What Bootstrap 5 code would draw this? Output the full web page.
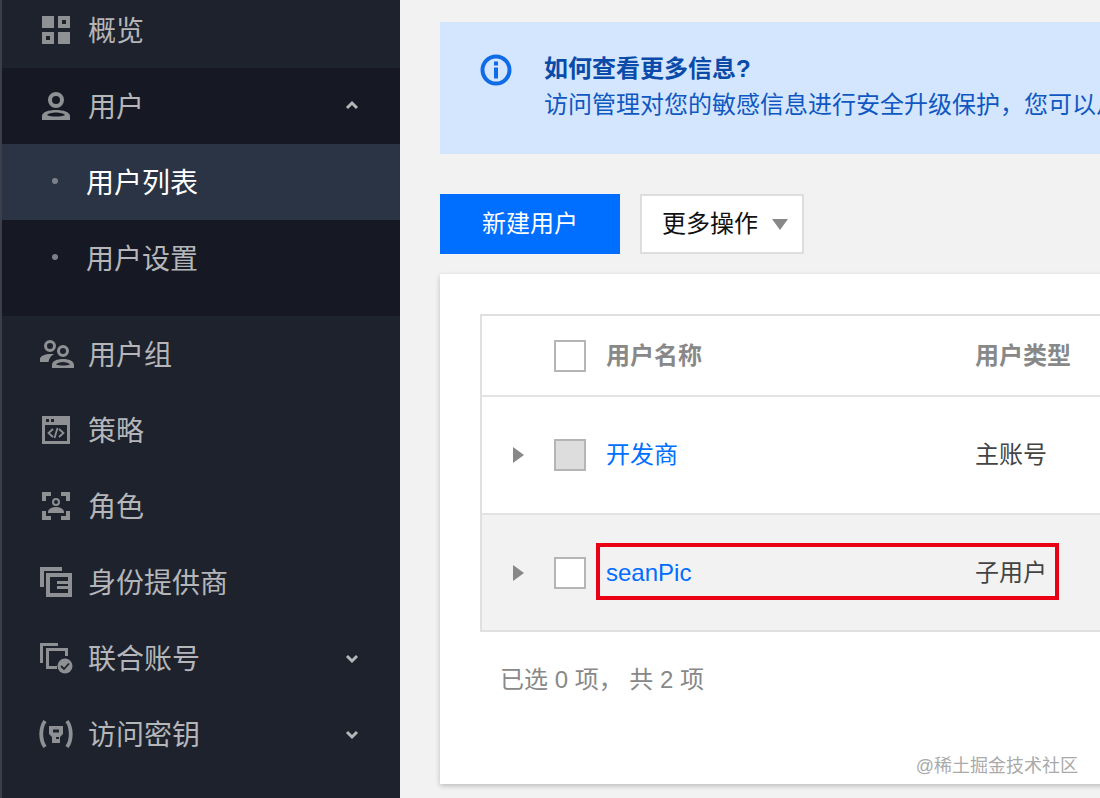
<!DOCTYPE html>
<html lang="zh-CN">
<head>
  <meta charset="UTF-8" />
  <meta name="viewport" content="width=device-width, initial-scale=1.0" />
  <title>用户列表</title>
  <link href="https://cdn.jsdelivr.net/npm/bootstrap@5.3.0/dist/css/bootstrap.min.css" rel="stylesheet">
  <style>
    html, body { height: 798px; overflow: hidden; }
    body {
      background: #f2f2f2;
      font-family: "Liberation Sans", "Noto Sans CJK SC", sans-serif;
    }
    .side-bar {
      width: 400px;
      height: 798px;
      flex: none;
      background: #1e222d;
      border-left: 2px solid #3b3f4b;
    }
    .side-item {
      height: 76px;
      padding: 0 0 0 36px;
      color: #b4b6b9;
      font-size: 28px;
      line-height: 1;
    }
    .side-item:hover { color: #b4b6b9; }
    .side-first { height: 68px; padding-bottom: 8px; }
    .side-icon { width: 36px; height: 32px; flex: none; margin-right: 14px; fill: #8e9093; }
    .side-label { margin-top: 3px; }
    .side-arrow { width: 16px; height: 12px; margin-left: auto; margin-right: 40px; fill: none; stroke: #b4b6b9; stroke-width: 3; }
    .side-group { background: #161923; padding-bottom: 20px; }
    .side-sub { padding-left: 50px; }
    .side-dot { width: 6px; height: 6px; border-radius: 50%; background: #7c808a; margin-right: 28px; margin-top: -2px; }
    .side-on { background: #2a3444; color: #fff; }
    .side-on:hover { color: #fff; }

    .main-area { flex: 1 1 auto; min-width: 0; padding: 22px 0 0 40px; }
    .notice-box {
      width: 700px;
      height: 132px;
      margin: 0;
      padding: 29px 0 0 40px;
      background: #d4e6fd;
      border: 0;
      border-radius: 0;
      color: #0f58c2;
      font-size: 24px;
      line-height: 36px;
      white-space: nowrap;
    }
    .notice-icon { width: 32px; height: 32px; margin: 3px 32px 0 0; flex: none; }
    .notice-title { color: #0a4baa; font-weight: 700; }
    .bar-row { margin: 40px 0 20px; gap: 20px; }
    .add-btn {
      width: 180px;
      height: 60px;
      background: #006eff;
      border: 0;
      border-radius: 0;
      font-size: 24px;
    }
    .more-btn {
      width: 164px;
      height: 60px;
      padding: 0 0 0 20px;
      background: #fff;
      border: 2px solid #ddd;
      border-radius: 0;
      color: #111;
      font-size: 24px;
    }
    .more-caret { width: 0; height: 0; margin-left: 14px; border: 8px solid transparent; border-top: 11px solid #888; border-bottom: 0; }
    .list-card { width: 700px; height: 510px; padding: 40px 0 0 40px; background: #fff; border: 0; border-radius: 0; box-shadow: 0 2px 5px rgba(0,0,0,.22); }
    .table-wrap { border: 2px solid #e0e0e0; border-right: 0; }
    .user-table { margin: 0; font-size: 24px; table-layout: fixed; width: 620px; }
    .user-table td, .user-table th { padding: 0; vertical-align: middle; border-bottom: 2px solid #e3e3e3; color: #444; }
    .user-table thead th { height: 80px; color: #888; font-weight: 700; }
    .user-table tbody td { height: 118px; box-shadow: none; }
    .user-table tbody tr:last-child td { border-bottom: 0; height: 116px; background: #f2f2f2; }
    .col-tree { width: 72px; }
    .col-name { width: 421px; }
    .tree-caret { display: block; margin-left: 31px; width: 0; height: 0; border: 8px solid transparent; border-left: 11px solid #888; border-right: 0; }
    .tick-box { display: block; width: 32px; height: 32px; margin-right: 20px; background: #fff; border: 2px solid #b5b5b5; }
    .tick-off { background: #ddd; }
    .user-link { color: #006eff; text-decoration: none; }
    .red-mark { position: absolute; left: 156px; top: 269px; width: 463px; height: 57px; border: 4px solid #ea0014; pointer-events: none; }
    .sum-line { margin: 31px 0 0 20px; color: #888; font-size: 24px; line-height: 34px; }
    .mark-text { position: absolute; right: 62px; bottom: 9px; color: #aaa; font-size: 18px; line-height: 1; }
  </style>
</head>
<body>
  <div class="d-flex">
    <nav class="side-bar nav flex-column flex-nowrap">
      <a class="side-item side-first d-flex align-items-center text-decoration-none" href="#">
        <svg class="side-icon" viewBox="0 0 36 32"><path fill-rule="evenodd" d="M4 2h12v12H4zM20 2h12v12H20zm4 4v4h4V6zM4 18h12v12H4zm4 4v4h4v-4zM20 18h12v12H20z"/></svg><span class="side-label">概览</span>
      </a>
      <div class="side-group">
        <a class="side-item d-flex align-items-center text-decoration-none" href="#">
          <svg class="side-icon" viewBox="0 0 36 32"><path fill-rule="evenodd" d="M18 2a8 8 0 1 1 0 16 8 8 0 0 1 0-16zm0 4a4 4 0 1 0 0 8 4 4 0 0 0 0-8zM4 30v-4c0-4 7-6 14-6s14 2 14 6v4zm5-5c2 1 5 1.500 9 1.500s7-.5 9-1.500c-1-1.500-5-2.500-9-2.500s-8 1-9 2.500z"/></svg><span class="side-label">用户</span>
          <svg class="side-arrow" viewBox="0 0 16 12"><path d="M3 8l5-5 5 5"/></svg>
        </a>
        <a class="side-item side-sub side-on d-flex align-items-center text-decoration-none" href="#"><span class="side-dot"></span><span class="side-label">用户列表</span></a>
        <a class="side-item side-sub d-flex align-items-center text-decoration-none" href="#"><span class="side-dot"></span><span class="side-label">用户设置</span></a>
      </div>
      <a class="side-item d-flex align-items-center text-decoration-none" href="#">
        <svg class="side-icon" viewBox="0 0 36 32"><path fill-rule="evenodd" d="M12 2a6 6 0 1 1 0 12 6 6 0 0 1 0-12zm0 3a3 3 0 1 0 0 6 3 3 0 0 0 0-6zM25 7a6 6 0 1 1 0 12 6 6 0 0 1 0-12zm0 3a3 3 0 1 0 0 6 3 3 0 0 0 0-6zM2 24v-3c0-3 5-5 11-5 1 0 2 0 3 .2-3 1.300-5 4.300-5.500 7.800zM14 30v-3c0-4 5-6 11-6s11 2 11 6v3zm4-3.500c2 .7 4 1 7 1s5-.3 7-1c-1-1.500-4-2.500-7-2.500s-6 1-7 2.500z"/></svg><span class="side-label">用户组</span>
      </a>
      <a class="side-item d-flex align-items-center text-decoration-none" href="#">
        <svg class="side-icon" viewBox="0 0 36 32"><path fill-rule="evenodd" d="M4 2h28v28H4zm3 9v16h22V11zm1-6v3h3V5zm5 0v3h3V5z"/><path d="M15 15l-4.500 4 4.500 4M21 15l4.500 4-4.500 4M19.500 14l-3 10" fill="none" stroke="#8e9093" stroke-width="1.800"/></svg><span class="side-label">策略</span>
      </a>
      <a class="side-item d-flex align-items-center text-decoration-none" href="#">
        <svg class="side-icon" viewBox="0 0 36 32"><path d="M4 2h9v4H8v5H4zM23 2h9v9h-4V6h-5zM4 21h4v5h5v4H4zM28 21h4v9h-9v-4h5z"/><path fill-rule="evenodd" d="M18 8a4 4 0 1 1 0 8 4 4 0 0 1 0-8zm0 2a2 2 0 1 0 0 4 2 2 0 0 0 0-4zM10 23v-1c0-3 4-5 8-5s8 2 8 5v1z"/></svg><span class="side-label">角色</span>
      </a>
      <a class="side-item d-flex align-items-center text-decoration-none" href="#">
        <svg class="side-icon" viewBox="0 0 36 32"><path d="M2 1h22v4H6v16H2z"/><path fill-rule="evenodd" d="M8 7h26v24H8zm4 4v16h18V11zm7 4h11v3H19zm0 5h11v3H19z"/></svg><span class="side-label">身份提供商</span>
      </a>
      <a class="side-item d-flex align-items-center text-decoration-none" href="#">
        <svg class="side-icon" viewBox="0 0 36 32"><path d="M2 1h18v3H5v17H2zM8 6h22v8h-3V9H11v15h8v3H8z"/><circle cx="27" cy="24" r="7.500"/><path d="M23 24l3 3 5-5.500" fill="none" stroke="#1e222d" stroke-width="1.800"/></svg><span class="side-label">联合账号</span>
        <svg class="side-arrow" viewBox="0 0 16 12"><path d="M3 4l5 5 5-5"/></svg>
      </a>
      <a class="side-item d-flex align-items-center text-decoration-none" href="#">
        <svg class="side-icon" viewBox="0 0 36 32"><path d="M7 3C2 10 2 22 7 29M29 3c5 7 5 19 0 26" fill="none" stroke="#8e9093" stroke-width="3.800"/><path fill-rule="evenodd" d="M11 8h14v8l-3 3v6h-8v-6l-3-3zm4 3.500v3h6v-3zm3 7.500v2h3v-2z"/></svg><span class="side-label">访问密钥</span>
        <svg class="side-arrow" viewBox="0 0 16 12"><path d="M3 4l5 5 5-5"/></svg>
      </a>
    </nav>

    <main class="main-area">
      <div class="notice-box alert d-flex" role="alert">
        <svg class="notice-icon" viewBox="0 0 32 32"><circle cx="16" cy="16" r="13.500" fill="none" stroke="#0f6be8" stroke-width="4"/><path d="M14 7.500h4v4h-4zM14 13.500h4v11h-4z" fill="#0f6be8"/></svg>
        <div>
          <div class="notice-title">如何查看更多信息?</div>
          <div>访问管理对您的敏感信息进行安全升级保护，您可以从</div>
        </div>
      </div>

      <div class="bar-row d-flex">
        <button type="button" class="add-btn btn btn-primary">新建用户</button>
        <button type="button" class="more-btn btn d-flex align-items-center">更多操作<span class="more-caret"></span></button>
      </div>

      <div class="list-card card position-relative d-block">
        <div class="table-wrap">
          <table class="user-table table">
            <thead>
              <tr>
                <th class="col-tree"></th>
                <th class="col-name"><div class="d-flex align-items-center"><span class="tick-box"></span>用户名称</div></th>
                <th>用户类型</th>
              </tr>
            </thead>
            <tbody>
              <tr>
                <td><span class="tree-caret"></span></td>
                <td><div class="d-flex align-items-center"><span class="tick-box tick-off"></span><a class="user-link" href="#">开发商</a></div></td>
                <td>主账号</td>
              </tr>
              <tr>
                <td><span class="tree-caret"></span></td>
                <td><div class="d-flex align-items-center"><span class="tick-box"></span><a class="user-link" href="#">seanPic</a></div></td>
                <td>子用户</td>
              </tr>
            </tbody>
          </table>
        </div>
        <div class="red-mark"></div>
        <div class="sum-line">已选 0 项， 共 2 项</div>
        <div class="mark-text">@稀土掘金技术社区</div>
      </div>
    </main>
  </div>
  <script src="https://cdn.jsdelivr.net/npm/bootstrap@5.3.0/dist/js/bootstrap.bundle.min.js"></script>
</body>
</html>
